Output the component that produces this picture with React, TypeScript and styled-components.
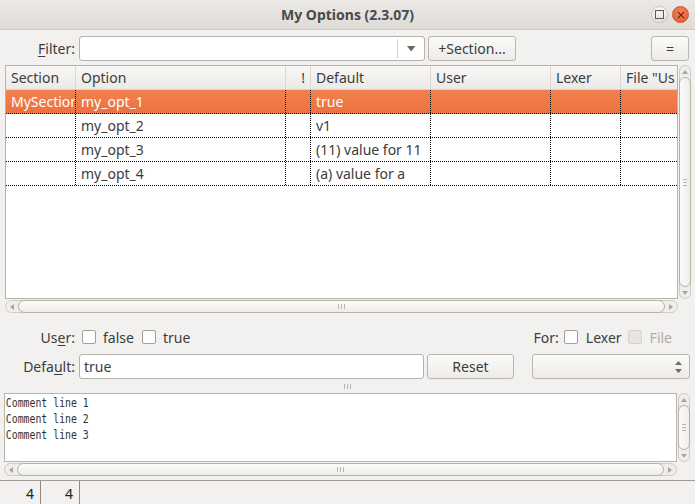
import React from "react";
import styled, { createGlobalStyle } from "styled-components";

const Global = createGlobalStyle`
  html, body { margin: 0; padding: 0; background: #f2f1f0; }
  body { font-family: "Noto Sans", "DejaVu Sans", sans-serif; font-size: 14px; color: #3c3c3c; }
  * { box-sizing: border-box; }
`;

const Win = styled.div`
  width: 695px; height: 504px; display: flex; flex-direction: column; background: #f2f1f0; overflow: hidden;
`;

const TitleBar = styled.div`
  height: 30px; flex: none; position: relative; display: flex; align-items: center; justify-content: center;
  background: linear-gradient(#ebe9e6, #dedbd7); border-bottom: 1px solid #cbc7c1;
  font-weight: bold; font-size: 14px; color: #4a4a4a;
`;

const WinButtons = styled.div`
  position: absolute; right: 6px; top: 6px; display: flex; gap: 4px;
`;

const RoundBtn = styled.div<{ $close?: boolean }>`
  width: 17px; height: 17px; border-radius: 50%; display: flex; align-items: center; justify-content: center;
  background: ${(p) => (p.$close ? "radial-gradient(circle at 50% 35%, #f3865a, #e0582a)" : "linear-gradient(#f8f7f6, #e4e2df)")};
  border: 1px solid ${(p) => (p.$close ? "#d0522a" : "#c9c5bf")};
`;

const Body = styled.div`
  flex: 1; display: flex; flex-direction: column; padding: 6px 5px 0 5px;
`;

const Row = styled.div<{ $h?: number; $mt?: number }>`
  display: flex; align-items: center; height: ${(p) => p.$h ?? 25}px; margin-top: ${(p) => p.$mt ?? 0}px; flex: none;
`;

const Label = styled.label<{ $w?: number }>`
  width: ${(p) => p.$w ?? 70}px; text-align: right; flex: none; margin-right: 4px; white-space: nowrap;
  u { text-decoration: underline; text-underline-offset: 2px; }
`;

const Combo = styled.div<{ $w: number }>`
  width: ${(p) => p.$w}px; height: 25px; display: flex; background: #fff; border: 1px solid #b7b2aa; border-radius: 3px;
  flex: none;
`;

const ComboText = styled.div`
  flex: 1;
`;

const ComboArrow = styled.div`
  width: 27px; border-left: 1px solid #d5d1cb; display: flex; align-items: center; justify-content: center;
  margin: 2px 0;
`;

const Button = styled.div<{ $w: number; $ml?: number }>`
  width: ${(p) => p.$w}px; height: 25px; margin-left: ${(p) => p.$ml ?? 3}px; flex: none;
  display: flex; align-items: center; justify-content: center; white-space: nowrap;
  border: 1px solid #bab5ae; border-radius: 3px; background: linear-gradient(#fbfbfa, #ecebe8);
  color: #3c3c3c;
`;

const Spacer = styled.div`flex: 1;`;

const ScrollArea = styled.div<{ $h: number; $ml?: number; $mt?: number }>`
  display: grid; grid-template-columns: 673px 12px; grid-template-rows: 1fr 14px; column-gap: 1px;
  height: ${(p) => p.$h}px; flex: none; margin-left: ${(p) => p.$ml ?? 0}px; margin-top: ${(p) => p.$mt ?? 0}px;
`;

const Viewport = styled.div`
  background: #fff; border: 1px solid #b8b3ab; overflow: hidden; position: relative;
`;

const VTrough = styled.div`
  border: 1px solid #cfcbc5; border-radius: 6px; background: #f0eeeb; display: flex; flex-direction: column; align-items: center;
`;

const HTrough = styled.div`
  border: 1px solid #cfcbc5; border-radius: 7px; background: #f0eeeb; display: flex; align-items: center; margin-top: 1px;
`;

const Arrow = styled.div<{ $v?: boolean }>`
  flex: none; ${(p) => (p.$v ? "height: 11px; width: 100%;" : "width: 12px; height: 100%;")}
  display: flex; align-items: center; justify-content: center;
`;

const Thumb = styled.div<{ $v?: boolean }>`
  flex: 1; align-self: stretch; margin: ${(p) => (p.$v ? "0 -1px" : "-1px 0")};
  border: 1px solid #b5b0a8; border-radius: 7px; background: ${(p) => (p.$v ? "linear-gradient(90deg, #fcfcfb, #efedea)" : "linear-gradient(#fcfcfb, #efedea)")};
  display: flex; align-items: center; justify-content: center;
`;

const Grip = styled.div<{ $v?: boolean }>`
  display: flex; flex-direction: ${(p) => (p.$v ? "column" : "row")}; gap: 2px;
  span { display: block; background: #b9b4ad; ${(p) => (p.$v ? "width: 4px; height: 1px;" : "width: 1px; height: 5px;")} }
`;

const Tri = ({ dir, color = "#a9a49d", size = 1 }: { dir: "up" | "down" | "left" | "right"; color?: string; size?: number }) => {
  const pts = {
    up: "0,4 3,0 6,4",
    down: "0,0 3,4 6,0",
    left: "4,0 0,3 4,6",
    right: "0,0 4,3 0,6",
  }[dir];
  const v = dir === "up" || dir === "down";
  return (
    <svg width={(v ? 6 : 4) * size} height={(v ? 4 : 6) * size} viewBox={v ? "0 0 6 4" : "0 0 4 6"}>
      <polygon points={pts} fill={color} />
    </svg>
  );
};

const VScroll = () => (
  <VTrough>
    <Arrow $v><Tri dir="up" /></Arrow>
    <Thumb $v>
      <Grip $v><span /><span /><span /></Grip>
    </Thumb>
    <Arrow $v><Tri dir="down" /></Arrow>
  </VTrough>
);

const HScroll = () => (
  <HTrough>
    <Arrow><Tri dir="left" /></Arrow>
    <Thumb>
      <Grip><span /><span /><span /></Grip>
    </Thumb>
    <Arrow><Tri dir="right" /></Arrow>
  </HTrough>
);

const cols = [70, 210, 25, 120, 120, 70, 60];

const HeaderRow = styled.div`
  display: flex; height: 24px; background: linear-gradient(#f8f7f6, #eceae7); border-bottom: 1px solid #d8d4ce;
`;

const HeadCell = styled.div<{ $w: number; $right?: boolean }>`
  width: ${(p) => p.$w}px; flex: none; padding: 0 5px; display: flex; align-items: center;
  justify-content: ${(p) => (p.$right ? "flex-end" : "flex-start")};
  border-right: 1px solid #dcd8d2; white-space: nowrap; overflow: hidden;
`;

const DataRow = styled.div<{ $sel?: boolean }>`
  display: flex; height: 24px; background: ${(p) => (p.$sel ? "linear-gradient(#f28150, #ed713f)" : "#fff")};
  color: ${(p) => (p.$sel ? "#fff" : "#3c3c3c")}; border-bottom: 1px dotted #000;
`;

const Cell = styled.div<{ $w: number }>`
  width: ${(p) => p.$w}px; flex: none; padding: 0 5px; display: flex; align-items: center;
  border-right: 1px dotted #000; white-space: nowrap; overflow: hidden;
`;

const CheckBox = styled.span<{ $disabled?: boolean; $ml?: number }>`
  width: 14px; height: 14px; flex: none; border-radius: 2px; display: inline-block; margin-left: ${(p) => p.$ml ?? 0}px;
  border: 1px solid ${(p) => (p.$disabled ? "#d6d3ce" : "#a39e97")};
  background: ${(p) => (p.$disabled ? "#e7e5e2" : "#fff")};
`;

const CheckLabel = styled.span<{ $disabled?: boolean; $ml?: number; $mr?: number }>`
  margin-left: ${(p) => p.$ml ?? 7}px; margin-right: ${(p) => p.$mr ?? 8}px; color: ${(p) => (p.$disabled ? "#b0aca6" : "#3c3c3c")};
`;

const TextInput = styled.div<{ $w: number }>`
  width: ${(p) => p.$w}px; height: 25px; flex: none; background: #fff; border: 1px solid #b7b2aa; border-radius: 3px;
  display: flex; align-items: center; padding-left: 4px;
`;

const SpinCombo = styled.div`
  width: 158px; height: 25px; margin-left: 18px; flex: none; border: 1px solid #bab5ae; border-radius: 3px;
  background: linear-gradient(#fbfbfa, #ecebe8); display: flex; align-items: center; justify-content: flex-end; padding-right: 7px;
`;

const Splitter = styled.div`
  height: 14px; flex: none; display: flex; align-items: center; justify-content: center;
`;

const Mono = styled.div`
  font-family: "DejaVu Sans Mono", "Liberation Mono", monospace; font-size: 12px;
  line-height: 16px; color: #333; padding: 1px 0 0 1px;
  transform: scaleX(0.82); transform-origin: 0 0; white-space: nowrap;
`;

const StatusBar = styled.div`
  height: 25px; flex: none; border-top: 1px solid #9f9a93; display: flex; margin: 4px -5px 0 -5px; background: #f2f1f0;
`;

const StatusCell = styled.div<{ $w: number }>`
  width: ${(p) => p.$w}px; flex: none; border-right: 1px solid #8e8a84; display: flex; align-items: center;
  justify-content: flex-end; padding-right: 6px; color: #222;
`;

export default function App() {
  const rows = [
    { s: "MySection", o: "my_opt_1", d: "true", sel: true },
    { s: "", o: "my_opt_2", d: "v1" },
    { s: "", o: "my_opt_3", d: "(11) value for 11" },
    { s: "", o: "my_opt_4", d: "(a) value for a" },
  ];
  return (
    <Win>
      <Global />
      <TitleBar>
        My Options (2.3.07)
        <WinButtons>
          <RoundBtn>
            <svg width="9" height="9" viewBox="0 0 9 9"><rect x="0.5" y="0.5" width="8" height="8" fill="none" stroke="#5a5a5a" /></svg>
          </RoundBtn>
          <RoundBtn $close>
            <svg width="8" height="8" viewBox="0 0 8 8"><path d="M1 1L7 7M7 1L1 7" stroke="#7a2a10" strokeWidth="1.2" /></svg>
          </RoundBtn>
        </WinButtons>
      </TitleBar>
      <Body>
        <Row $h={25}>
          <Label><u>F</u>ilter:</Label>
          <Combo $w={346}>
            <ComboText />
            <ComboArrow><Tri dir="down" color="#6e6a65" size={1.4} /></ComboArrow>
          </Combo>
          <Button $w={88}>+Section...</Button>
          <Spacer />
          <Button $w={38}>=</Button>
          <div style={{ width: 1 }} />
        </Row>
        <ScrollArea $h={248} $mt={4}>
          <Viewport>
            <HeaderRow>
              <HeadCell $w={cols[0]}>Section</HeadCell>
              <HeadCell $w={cols[1]}>Option</HeadCell>
              <HeadCell $w={cols[2]} $right>!</HeadCell>
              <HeadCell $w={cols[3]}>Default</HeadCell>
              <HeadCell $w={cols[4]}>User</HeadCell>
              <HeadCell $w={cols[5]}>Lexer</HeadCell>
              <HeadCell $w={cols[6]}>File "Us</HeadCell>
            </HeaderRow>
            {rows.map((r, i) => (
              <DataRow key={i} $sel={r.sel}>
                <Cell $w={cols[0]}>{r.s}</Cell>
                <Cell $w={cols[1]}>{r.o}</Cell>
                <Cell $w={cols[2]} />
                <Cell $w={cols[3]}>{r.d}</Cell>
                <Cell $w={cols[4]} />
                <Cell $w={cols[5]} />
                <Cell $w={cols[6]} />
              </DataRow>
            ))}
          </Viewport>
          <VScroll />
          <HScroll />
          <div />
        </ScrollArea>
        <Row $h={24} $mt={12}>
          <Label>Us<u>e</u>r:</Label>
          <CheckBox $ml={3} />
          <CheckLabel>false</CheckLabel>
          <CheckBox />
          <CheckLabel>true</CheckLabel>
          <Spacer />
          <span>For:</span>
          <CheckBox $ml={5} />
          <CheckLabel $ml={8} $mr={6}>Lexer</CheckLabel>
          <CheckBox $disabled />
          <CheckLabel $disabled $ml={8} $mr={18}>File</CheckLabel>
        </Row>
        <Row $h={25} $mt={5}>
          <Label>Defa<u>u</u>lt:</Label>
          <TextInput $w={345}>true</TextInput>
          <Button $w={87} $ml={3}>Reset</Button>
          <SpinCombo>
            <svg width="7" height="12" viewBox="0 0 7 12"><polygon points="0,4 3.5,0 7,4" fill="#6e6a65" /><polygon points="0,8 3.5,12 7,8" fill="#6e6a65" /></svg>
          </SpinCombo>
        </Row>
        <Splitter>
          <Grip><span /><span /><span /></Grip>
        </Splitter>
        <ScrollArea $h={83} $ml={-1}>
          <Viewport>
            <Mono>
              Comment line 1<br />Comment line 2<br />Comment line 3
            </Mono>
          </Viewport>
          <VScroll />
          <HScroll />
          <div />
        </ScrollArea>
        <StatusBar>
          <StatusCell $w={41}>4</StatusCell>
          <StatusCell $w={39}>4</StatusCell>
        </StatusBar>
      </Body>
    </Win>
  );
}
